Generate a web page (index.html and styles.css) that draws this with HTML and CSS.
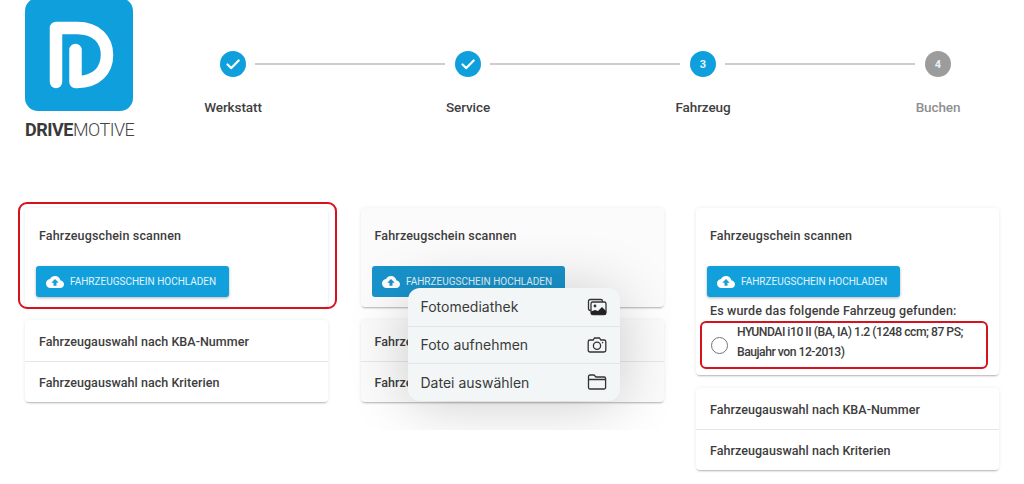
FILE: index.html
```html
<!DOCTYPE html>
<html lang="de">
<head>
<meta charset="utf-8">
<title>DriveMotive</title>
<link rel="stylesheet" href="styles.css">
</head>
<body>
<svg class="defs" width="0" height="0" aria-hidden="true">
  <symbol id="cloud" viewBox="0 0 24 24"><path d="M19.35 10.04C18.67 6.59 15.64 4 12 4 9.11 4 6.6 5.64 5.35 8.04 2.34 8.36 0 10.91 0 14c0 3.31 2.69 6 6 6h13c2.76 0 5-2.24 5-5 0-2.64-2.05-4.78-4.65-4.96zM14 13v4h-4v-4H7l5-5 5 5h-3z"/></symbol>
  <symbol id="check" viewBox="0 0 26 26"><path d="M7.5 13.5l3.8 3.6 7.4-7.6" fill="none" stroke="#fff" stroke-width="2.2" stroke-linecap="round" stroke-linejoin="round"/></symbol>
</svg>
<header class="top">
  <div class="brand">
    <svg class="logo" viewBox="0 0 108 112" aria-hidden="true">
      <rect y="-2" width="108" height="113" rx="13" fill="#0f9fdc"/>
      <path d="M31 82V28H52C72 28 82 40 82 55S72 82 52 82H50.500V50" fill="none" stroke="#fff" stroke-width="12.500" stroke-linecap="round" stroke-linejoin="round"/>
    </svg>
    <div class="wordmark"><b>DRIVE</b>MOTIVE</div>
  </div>
  <ol class="stepper">
    <li class="step"><span class="dot"><svg class="tick"><use href="#check"/></svg></span><span class="step-label">Werkstatt</span></li>
    <li class="rule"></li>
    <li class="step"><span class="dot"><svg class="tick"><use href="#check"/></svg></span><span class="step-label">Service</span></li>
    <li class="rule"></li>
    <li class="step"><span class="dot">3</span><span class="step-label">Fahrzeug</span></li>
    <li class="rule"></li>
    <li class="step todo"><span class="dot">4</span><span class="step-label">Buchen</span></li>
  </ol>
</header>
<main class="columns">
  <section class="col">
    <div class="card scan">
      <h2 class="title">Fahrzeugschein scannen</h2>
      <button class="upload"><svg class="cloud"><use href="#cloud"/></svg><span class="upload-text">FAHRZEUGSCHEIN HOCHLADEN</span></button>
      <span class="mark"></span>
    </div>
    <div class="card list">
      <div class="row">Fahrzeugauswahl nach KBA-Nummer</div>
      <div class="row">Fahrzeugauswahl nach Kriterien</div>
    </div>
  </section>
  <section class="col shot">
    <div class="card scan dim">
      <h2 class="title">Fahrzeugschein scannen</h2>
      <button class="upload"><svg class="cloud"><use href="#cloud"/></svg><span class="upload-text">FAHRZEUGSCHEIN HOCHLADEN</span></button>
    </div>
    <div class="card list dim">
      <div class="row">Fahrzeugauswahl nach KBA-Nummer</div>
      <div class="row">Fahrzeugauswahl nach Kriterien</div>
    </div>
    <ul class="menu">
      <li class="item">Fotomediathek
        <svg class="ico" viewBox="0 0 20 20"><rect x="1.5" y="2.5" width="14" height="11" rx="1.8" fill="none" stroke="#333" stroke-width="1.3"/><rect x="4" y="5" width="15" height="12.5" rx="1.8" fill="#f3f6f7" stroke="#333" stroke-width="1.3"/><circle cx="8" cy="9" r="1.4" fill="#333"/><path d="M4 17.5v-3l4 -1.5 3 1 4-4 4 4v3.500z" fill="#222"/></svg>
      </li>
      <li class="item">Foto aufnehmen
        <svg class="ico" viewBox="0 0 20 20"><path d="M3 5h3.200l1.300-2h5l1.300 2H17a1.800 1.800 0 0 1 1.800 1.800v8.400A1.800 1.800 0 0 1 17 17H3a1.800 1.800 0 0 1-1.800-1.800V6.800A1.800 1.800 0 0 1 3 5z" fill="none" stroke="#333" stroke-width="1.300"/><circle cx="10" cy="10.800" r="3.600" fill="none" stroke="#333" stroke-width="1.300"/><circle cx="15.600" cy="7.600" r=".8" fill="#333"/></svg>
      </li>
      <li class="item">Datei auswählen
        <svg class="ico" viewBox="0 0 20 20"><path d="M1.500 6V4.500A1.500 1.500 0 0 1 3 3h4l2 2h8a1.600 1.600 0 0 1 1.600 1.600v9A1.500 1.500 0 0 1 17 17H3a1.500 1.500 0 0 1-1.500-1.500zM1.500 7.500h17" fill="none" stroke="#333" stroke-width="1.300"/></svg>
      </li>
    </ul>
  </section>
  <section class="col">
    <div class="card scan found">
      <h2 class="title">Fahrzeugschein scannen</h2>
      <button class="upload"><svg class="cloud"><use href="#cloud"/></svg><span class="upload-text">FAHRZEUGSCHEIN HOCHLADEN</span></button>
      <p class="found-note">Es wurde das folgende Fahrzeug gefunden:</p>
      <label class="vehicle"><span class="radio"></span><span class="vehicle-name">HYUNDAI i10 II (BA, IA) 1.2 (1248 ccm; 87 PS; Baujahr von 12-2013)</span></label>
    </div>
    <div class="card list">
      <div class="row">Fahrzeugauswahl nach KBA-Nummer</div>
      <div class="row">Fahrzeugauswahl nach Kriterien</div>
    </div>
  </section>
</main>
</body>
</html>
```
FILE: styles.css
```css
* { box-sizing: border-box; }
html, body { margin: 0; height: 484px; overflow: hidden; background: #fff; }
body { font-family: Roboto, "Liberation Sans", sans-serif; color: #3d3d3d; }
.defs { position: absolute; }

.top { display: flex; height: 208px; padding-left: 25px; align-items: flex-start; }
.brand { width: 109px; flex: none; }
.logo { display: block; width: 108px; height: 112px; }
.wordmark { margin-top: 7px; font-size: 18px; line-height: 22px; font-weight: 300; letter-spacing: -.5px; white-space: nowrap; color: #444; }
.wordmark b { font-weight: 700; color: #3a3a3a; }

.stepper { list-style: none; display: flex; flex: none; width: 731px; margin: 51px 0 0 86px; padding: 0; }
.step { display: flex; flex-direction: column; align-items: center; width: 26px; flex: none; }
.dot { display: flex; align-items: center; justify-content: center; width: 26px; height: 26px; border-radius: 50%; background: #0f9fdc; color: #e4f3fb; font-size: 11px; font-weight: 700; }
.tick { width: 26px; height: 26px; }
.step-label { margin-top: 22px; font-size: 13.500px; line-height: 16px; font-weight: 500; letter-spacing: -.1px; white-space: nowrap; color: #3f3f3f; }
.todo .dot { background: #9c9c9c; }
.todo .step-label { color: #8f8f8f; }
.rule { flex: 1; height: 2px; margin: 12px 10px 0 9px; background: #cdcdcd; }

.columns { display: grid; grid-template-columns: repeat(3, 303px); column-gap: 32.500px; padding-left: 25px; align-items: start; }
.col { position: relative; display: flex; flex-direction: column; gap: 13px; }
.card { position: relative; background: #fff; border-radius: 4px; box-shadow: 0 2px 2px -1px rgba(0,0,0,.28), 0 0 4px rgba(0,0,0,.07); }
.scan { height: 99px; padding: 20px 11px 0; }
.found { height: 167px; }
.title { margin: 0 0 0 3px; font-size: 12.500px; line-height: 16px; font-weight: 500; letter-spacing: .15px; color: #3d3d3d; }
.upload { display: flex; align-items: center; width: 193px; height: 31px; margin: 22px 0 0; padding: 0 0 0 10px; border: 0; border-radius: 3px; background: #12a0dc; box-shadow: 0 1px 3px rgba(0,0,0,.3); color: #e2f3fb; font: 400 11.500px/1 Roboto, sans-serif; white-space: nowrap; }
.upload-text { display: block; transform: scaleX(.87); transform-origin: left center; }
.cloud { width: 18px; height: 18px; margin-right: 6px; fill: #fff; flex: none; }
.mark { position: absolute; inset: -6px -9px -2px -7px; border: 2px solid #d5121e; border-radius: 9px; pointer-events: none; }

.list { height: 82px; }
.row { height: 41px; padding: 0 14px; font-size: 12.500px; line-height: 43px; font-weight: 500; letter-spacing: .05px; white-space: nowrap; }
.row + .row { border-top: 1px solid #e6e6e6; line-height: 42px; }

.found-note { margin: 6px 0 0 3px; font-size: 12.500px; line-height: 16px; font-weight: 500; letter-spacing: .15px; white-space: nowrap; }
.vehicle { display: flex; align-items: center; margin: 2px 0 0 -7px; width: 288px; height: 48px; padding-left: 9px; border: 2px solid #d5121e; border-radius: 6px; }
.radio { flex: none; width: 17px; height: 17px; border: 1.500px solid #757575; border-radius: 50%; margin-right: 9px; }
.vehicle-name { width: 240px; margin-bottom: 6px; font-size: 12.200px; line-height: 20.500px; font-weight: 500; letter-spacing: -.5px; }

.shot { clip-path: inset(-8px -9px -28px -25px); }
.dim { background: #fbfbfb; }
.dim .upload { background: #1893cc; box-shadow: none; }
.menu { position: absolute; left: 47px; top: 80px; width: 212px; height: 113px; margin: 0; padding: 0; list-style: none; background: #f2f6f7; border-radius: 12px; box-shadow: 0 4px 60px rgba(0,0,0,.2); }
.item { display: flex; align-items: center; justify-content: space-between; height: 37.500px; padding: 0 13px 0 13px; font-family: Inter, Roboto, sans-serif; font-size: 14px; font-weight: 400; color: #3a3a3a; }
.item + .item { border-top: 1px solid #e2e4e5; }
.ico { width: 20px; height: 20px; flex: none; }
```
